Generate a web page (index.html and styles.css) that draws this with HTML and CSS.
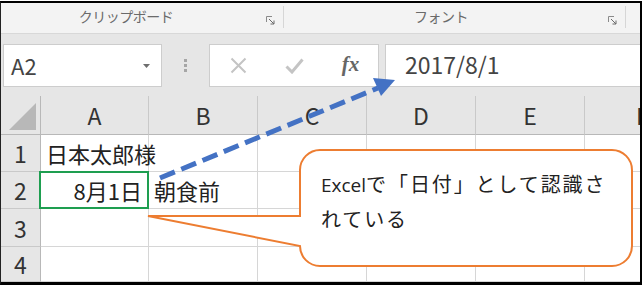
FILE: index.html
```
<!DOCTYPE html>
<html>
<head>
  <meta charset="utf-8">
  <title>Excel 日付</title>
  <link rel="stylesheet" href="styles.css">
</head>
<body>
  <div class="frame">
    <div class="ribbon">
      <div class="group g-clip">
        <span class="label">クリップボード</span>
        <svg class="launcher" width="9" height="9" viewBox="0 0 9 9"><path d="M0.5 6V0.5H6" fill="none" stroke="#8a8a8a"/><path d="M3 3L8 8M8 4.5V8H4.5" fill="none" stroke="#6a6a6a"/></svg>
      </div>
      <div class="group g-font">
        <span class="label">フォント</span>
        <svg class="launcher" width="9" height="9" viewBox="0 0 9 9"><path d="M0.5 6V0.5H6" fill="none" stroke="#8a8a8a"/><path d="M3 3L8 8M8 4.5V8H4.5" fill="none" stroke="#6a6a6a"/></svg>
      </div>
    </div>

    <div class="fbar">
      <div class="namebox">
        <span>A2</span>
        <svg width="7" height="4" viewBox="0 0 7 4"><path d="M0 0H7L3.5 4Z" fill="#6e6e6e"/></svg>
      </div>
      <div class="grip"><i></i><i></i><i></i></div>
      <div class="fbtns">
        <span class="btn"><svg width="17" height="17" viewBox="0 0 17 17"><path d="M1.5 1.5L15.5 15.5M15.5 1.5L1.5 15.5" stroke="#c4c4c4" stroke-width="2"/></svg></span>
        <span class="btn"><svg width="19" height="16" viewBox="0 0 19 16"><path d="M1.5 8.5L7 14L17.5 1.5" fill="none" stroke="#c4c4c4" stroke-width="3"/></svg></span>
        <span class="btn fx">fx</span>
      </div>
      <div class="finput">2017/8/1</div>
    </div>

    <div class="sheet">
      <div class="hd corner"><span class="tri"></span></div>
      <div class="hd col">A</div>
      <div class="hd col">B</div>
      <div class="hd col">C</div>
      <div class="hd col">D</div>
      <div class="hd col">E</div>
      <div class="hd col last">F</div>

      <div class="hd row">1</div>
      <div class="cell">日本太郎様</div>
      <div class="cell"></div>
      <div class="cell"></div>
      <div class="cell"></div>
      <div class="cell"></div>
      <div class="cell last"></div>

      <div class="hd row">2</div>
      <div class="cell num sel">8月1日</div>
      <div class="cell">朝食前</div>
      <div class="cell"></div>
      <div class="cell"></div>
      <div class="cell"></div>
      <div class="cell last"></div>

      <div class="hd row">3</div>
      <div class="cell"></div>
      <div class="cell"></div>
      <div class="cell"></div>
      <div class="cell"></div>
      <div class="cell"></div>
      <div class="cell last"></div>

      <div class="hd row">4</div>
      <div class="cell"></div>
      <div class="cell"></div>
      <div class="cell"></div>
      <div class="cell"></div>
      <div class="cell"></div>
      <div class="cell last"></div>
    </div>
  </div>

  <!-- annotations drawn over the sheet -->
  <svg class="overlay" width="642" height="285" viewBox="0 0 642 285">
    <line x1="160" y1="178" x2="378" y2="88" stroke="#4472c4" stroke-width="5" stroke-dasharray="16 7"/>
    <polygon points="395,80 381,96 373,78" fill="#4472c4"/>
    <path d="M320 150H612A20 20 0 0 1 632 170V246A20 20 0 0 1 612 266H320A20 20 0 0 1 300 246L148 216H300V170A20 20 0 0 1 320 150Z" fill="#fff" stroke="#ed7d31" stroke-width="2"/>
  </svg>
  <div class="callout-text"><span class="latin">Excel</span>で「日付」として認識さ<br>れている</div>
</body>
</html>
```

FILE: styles.css
```
html, body {margin:0; padding:0;}
body {
  position:relative;
  width:642px; height:285px;
  overflow:hidden;
  background:#fff;
  font-family:"Noto Sans CJK JP", "Noto Sans", sans-serif;
}

.frame {
  margin-top:1px;
  height:284px;
  box-sizing:border-box;
  border-top:2px solid #000;
  border-right:2px solid #000;
  border-bottom:3px solid #000;
  border-left:1px solid #222;
  display:flex; flex-direction:column;
  overflow:hidden;
}

/* ribbon group names */
.ribbon {
  display:flex;
  height:33px;
  background:#f3f3f3;
  border-bottom:1px solid #d8d8d8;
}
.group {
  display:flex; align-items:center;
  margin:3px 0 5px;
  border-right:1px solid #d6d6d6;
}
.g-clip {width:282px;}
.g-font {width:341px;}
.group .label {
  flex:1;
  text-align:center;
  font-size:14px;
  letter-spacing:-0.5px;
  color:#6a6a6a;
  padding-bottom:2px;
}
.g-clip .launcher {margin:6px 8px 0 15px;}
.g-font .launcher {margin:6px 8px 0 10px;}

/* formula bar */
.fbar {
  display:flex; align-items:flex-start;
  height:68px;
  box-sizing:border-box;
  padding:10px 0 0 2px;
  background:#e6e6e6;
}
.namebox, .fbtns, .finput {
  height:43px;
  box-sizing:border-box;
  background:#fff;
  border:1px solid #cdcdcd;
}
.namebox {
  width:159px;
  display:flex; align-items:center; justify-content:space-between;
  padding:0 11px 0 7px;
  font-size:22px; color:#444;
}
.namebox span {margin-top:-2px;}
.grip {
  width:47px; height:43px;
  display:flex; flex-direction:column; align-items:center; justify-content:center; gap:2px;
}
.grip i {width:3px; height:3px; background:#a6a6a6;}
.fbtns {
  width:170px;
  display:grid; grid-template-columns:56px 57px 1fr;
  align-items:center; justify-items:center;
}
.btn {display:flex;}
.fx {
  font-family:"Liberation Serif", serif;
  font-style:italic; font-weight:bold;
  font-size:21px; color:#666;
  margin-top:-3px;
}
.finput {
  flex:1;
  margin-left:6px;
  border-right:none;
  padding-left:19px;
  font-size:23px; line-height:38px; color:#444;
}

/* sheet grid */
.sheet {
  flex:1;
  display:grid;
  grid-template-columns:40px 108px 109px 109px 109px 109px 1fr;
  grid-template-rows:39px 37px 37px 38px 1fr;
  background:#fff;
}
.hd {
  background:#e6e6e6;
  color:#333;
  font-size:23px;
  display:flex; align-items:center; justify-content:center;
  box-sizing:border-box;
}
.hd.col {border-right:1px solid #c9c9c9; border-bottom:1px solid #b8b8b8;}
.hd.col.last {justify-content:flex-start; padding-left:51px; border-right:none; overflow:hidden;}
.hd.row {border-right:1px solid #b8b8b8; border-bottom:1px solid #c9c9c9;}
.hd.corner {
  position:relative;
  border-right:1px solid #b8b8b8; border-bottom:1px solid #b8b8b8;
}
.tri {
  position:absolute; right:4px; bottom:4px;
  width:0; height:0;
  border-left:27px solid transparent;
  border-bottom:27px solid #b8b8b8;
}

.cell {
  position:relative;
  box-sizing:border-box;
  border-right:1px solid #d6d6d6;
  border-bottom:1px solid #d6d6d6;
  padding:0 5px;
  font-size:22px; color:#222;
  display:flex; align-items:center;
  white-space:nowrap;
}
.cell.last {border-right:none;}
.cell.num {justify-content:flex-end; padding-right:6px;}
.cell.sel::after {
  content:"";
  position:absolute;
  left:-2px; top:-1px; right:-1px; bottom:-1px;
  border:2px solid #1e9e50;
}

/* annotation layer */
.overlay {position:absolute; left:0; top:0;}
.callout-text {
  position:absolute; left:321px; top:167px;
  font-size:20px; line-height:34px;
  letter-spacing:1.9px;
  color:#222;
}
.callout-text .latin {
  font-family:"Open Sans", sans-serif;
  font-size:19px; letter-spacing:0;
}
```
